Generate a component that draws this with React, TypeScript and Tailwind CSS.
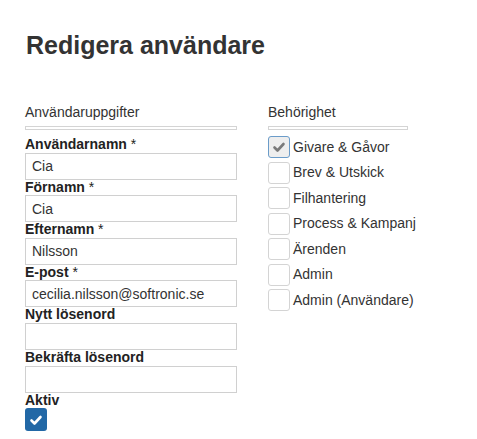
import { useState } from "react";

const fields = [
    { label: "Användarnamn", required: true, value: "Cia" },
    { label: "Förnamn", required: true, value: "Cia" },
    { label: "Efternamn", required: true, value: "Nilsson" },
    { label: "E-post", required: true, value: "cecilia.nilsson@softronic.se" },
    { label: "Nytt lösenord", required: false, value: "" },
    { label: "Bekräfta lösenord", required: false, value: "" },
];

const roles = [
    { name: "Givare & Gåvor", checked: true },
    { name: "Brev & Utskick", checked: false },
    { name: "Filhantering", checked: false },
    { name: "Process & Kampanj", checked: false },
    { name: "Ärenden", checked: false },
    { name: "Admin", checked: false },
    { name: "Admin (Användare)", checked: false },
];

const Check = ({ color }: { color: string }) => (
    <svg width="14" height="14" viewBox="0 0 14 14">
        <polyline
            points="2.5,7.5 5.5,10.5 11.5,4"
            fill="none"
            stroke={color}
            strokeWidth="2.6"
            strokeLinecap="round"
            strokeLinejoin="round"
        />
    </svg>
);

const SectionHeader = ({ title }: { title: string }) => (
    <div>
        <div className="text-[14px] leading-[20px] text-[#333]">{title}</div>
        <div className="mt-[4px] h-[4px] border border-[#d4d4d4] bg-white" />
    </div>
);

export default function App() {
    const [values, setValues] = useState(fields.map((f) => f.value));

    return (
        <div
            className="min-h-screen bg-white px-[25px] pt-[29px] text-[#333]"
            style={{ fontFamily: '"Liberation Sans", Arial, sans-serif' }}
        >
            <h1 className="ml-[1px] text-[25px] font-bold leading-[32px] text-[#333]">
                Redigera användare
            </h1>

            <div className="mt-[41px] flex">
                <div className="w-[212px]">
                    <SectionHeader title="Användaruppgifter" />
                    <div className="mt-[7px] flex flex-col">
                        {fields.map((f, i) => (
                            <div key={f.label}>
                                <div className="text-[14px] font-bold leading-[15.6px] text-[#222]">
                                    {f.label}
                                    {f.required && (
                                        <span className="font-normal"> *</span>
                                    )}
                                </div>
                                <input
                                    type={i >= 4 ? "password" : "text"}
                                    value={values[i]}
                                    onChange={(e) => {
                                        const next = [...values];
                                        next[i] = e.target.value;
                                        setValues(next);
                                    }}
                                    className="block h-[27px] w-full border border-[#d0d0d0] bg-white px-[6px] text-[14px] text-[#333] outline-none"
                                />
                            </div>
                        ))}
                        <div className="text-[14px] font-bold leading-[15.6px] text-[#222]">
                            Aktiv
                        </div>
                        <div className="flex h-[23px] w-[22px] items-center justify-center rounded-[3px] bg-[#2268a6]">
                            <Check color="#ffffff" />
                        </div>
                    </div>
                </div>

                <div className="ml-[31px] w-[140px]">
                    <SectionHeader title="Behörighet" />
                    <div className="mt-[6px] flex flex-col gap-[3.5px]">
                        {roles.map((r) => (
                            <div key={r.name} className="flex items-center whitespace-nowrap">
                                <div
                                    className={
                                        r.checked
                                            ? "flex h-[22px] w-[22px] shrink-0 items-center justify-center rounded-[3px] border border-[#6b9cc9] bg-[#eeeeee]"
                                            : "h-[22px] w-[22px] shrink-0 rounded-[3px] border border-[#d4d4d4] bg-white"
                                    }
                                >
                                    {r.checked && <Check color="#7a7a7a" />}
                                </div>
                                <span className="ml-[3px] -mt-[1px] text-[14px] leading-[16px] text-[#333]">
                                    {r.name}
                                </span>
                            </div>
                        ))}
                    </div>
                </div>
            </div>
        </div>
    );
}
